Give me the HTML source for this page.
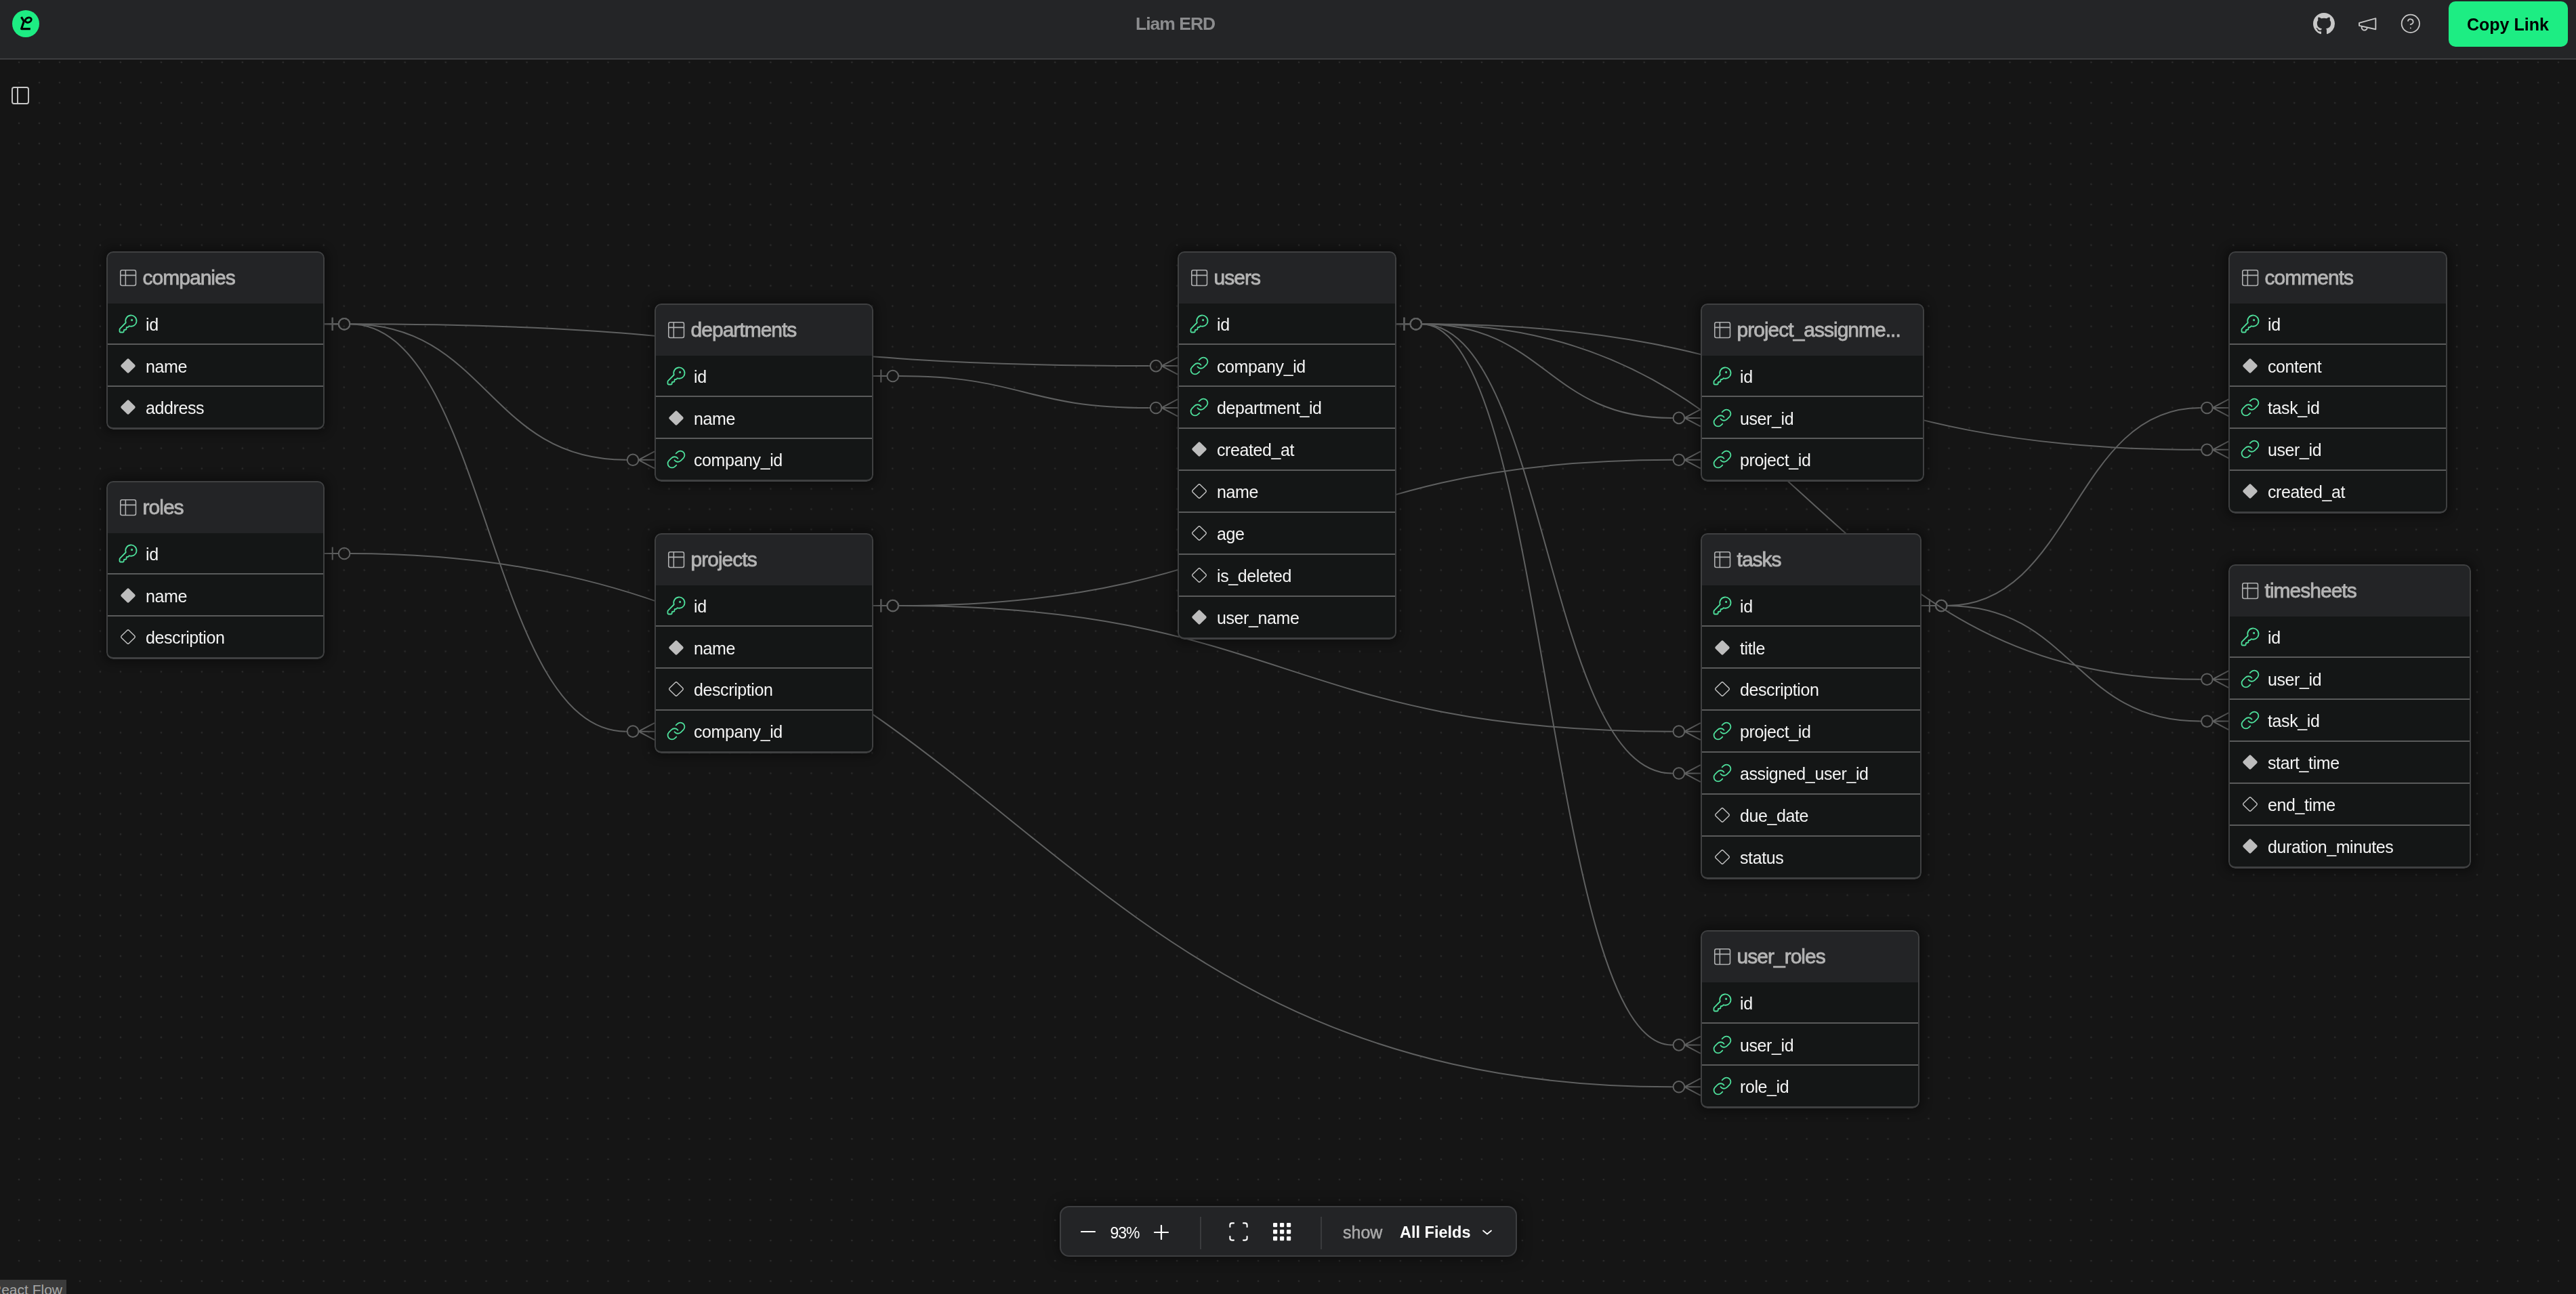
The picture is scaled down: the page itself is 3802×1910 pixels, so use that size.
<!DOCTYPE html>
<html><head><meta charset="utf-8"><style>
*{margin:0;padding:0;box-sizing:border-box}
html,body{width:3802px;height:1910px;overflow:hidden;background:#151515;font-family:"Liberation Sans",sans-serif;-webkit-font-smoothing:antialiased}
.gs{will-change:transform}
#flow{position:absolute;left:0;top:88px;width:3802px;height:1822px;background-color:#151515;
 background-image:radial-gradient(circle, #2b2b2b 0, #2b2b2b 1.0px, rgba(43,43,43,0) 1.7px);
 background-size:29.99px 29.99px;background-position:13.01px -11.07px}
#hdr{position:absolute;left:0;top:0;width:3802px;height:88px;background:#242527;border-bottom:2px solid #3d3e40}
#edges{position:absolute;left:0;top:0;width:3802px;height:1910px}
#edges path,#edges circle{fill:none;stroke:#5f6060;stroke-width:2}
.tbl{position:absolute;border-radius:10px;background:#141616;overflow:hidden;box-shadow:0 0 14px 6px rgba(0,0,0,.32)}
.bd{position:absolute;left:0;top:0;right:0;bottom:0;border:2px solid #3f4041;border-bottom-width:3px;border-radius:10px}
.hd{position:absolute;left:0;top:0;right:0;background:#232426}
.ti{position:absolute;left:16.7px;top:24.15px;width:30.3px;height:30.3px;fill:none;stroke:#b0b1b2;stroke-width:1.25;stroke-linecap:round;stroke-linejoin:round}
.tn{position:absolute;left:53.6px;top:22px;font-size:30px;line-height:34px;letter-spacing:-1px;color:#b4b4b4;-webkit-text-stroke:.8px #b4b4b4;white-space:nowrap}
.sep{position:absolute;left:0;right:0;height:2px;background:#5a5b5b}
.fi{position:absolute;left:16.8px;width:30px;height:30px;fill:none;stroke:#4ee09c;stroke-width:1.45;stroke-linecap:round;stroke-linejoin:round}
.di{position:absolute;left:19.8px;width:24px;height:24px}
.di .f{fill:#bdbdbd}
.di .o{fill:none;stroke:#c8c8c8;stroke-width:1.35}
.fn{position:absolute;left:58px;font-size:25px;line-height:28px;letter-spacing:-.4px;color:#f4f4f4;white-space:nowrap}
#tb{position:absolute;left:1564px;top:1780px;width:675px;height:75px;background:#232426;border:2px solid #3d3e40;border-radius:14px;box-shadow:0 0 20px rgba(0,0,0,.5)}
</style></head><body>
<div id="flow"></div>
<svg id="edges" viewBox="0 0 3802 1910"><path d="M515.90 478.24 C719.70 478.24 719.70 678.79 923.50 678.79"/><path d="M515.90 478.24 C1105.70 478.24 1105.70 540.11 1695.50 540.11"/><path d="M515.90 478.24 C719.70 478.24 719.70 1079.66 923.50 1079.66"/><path d="M1325.50 555.04 C1510.50 555.04 1510.50 601.99 1695.50 601.99"/><path d="M515.90 817.04 C1491.60 817.04 1491.60 1604.29 2467.30 1604.29"/><path d="M2097.60 478.24 C2282.45 478.24 2282.45 616.91 2467.30 616.91"/><path d="M2097.60 478.24 C2282.45 478.24 2282.45 1141.54 2467.30 1141.54"/><path d="M2097.60 478.24 C2282.45 478.24 2282.45 1542.41 2467.30 1542.41"/><path d="M2097.60 478.24 C2672.20 478.24 2672.20 663.86 3246.80 663.86"/><path d="M2097.60 478.24 C2672.20 478.24 2672.20 1002.71 3246.80 1002.71"/><path d="M1325.50 894.04 C1896.40 894.04 1896.40 678.79 2467.30 678.79"/><path d="M1325.50 894.04 C1896.40 894.04 1896.40 1079.66 2467.30 1079.66"/><path d="M2873.10 894.04 C3059.95 894.04 3059.95 601.99 3246.80 601.99"/><path d="M2873.10 894.04 C3059.95 894.04 3059.95 1064.59 3246.80 1064.59"/><path d="M478.90 478.24H499.80M490.70 468.74V487.74"/><circle cx="508.10" cy="478.24" r="8.30"/><path d="M923.50 678.79H925.80"/><circle cx="934.10" cy="678.79" r="8.30"/><path d="M942.40 678.79L966.00 666.29M942.40 678.79L966.00 678.79M942.40 678.79L966.00 691.29"/><path d="M478.90 478.24H499.80M490.70 468.74V487.74"/><circle cx="508.10" cy="478.24" r="8.30"/><path d="M1695.50 540.11H1697.80"/><circle cx="1706.10" cy="540.11" r="8.30"/><path d="M1714.40 540.11L1738.00 527.61M1714.40 540.11L1738.00 540.11M1714.40 540.11L1738.00 552.61"/><path d="M478.90 478.24H499.80M490.70 468.74V487.74"/><circle cx="508.10" cy="478.24" r="8.30"/><path d="M923.50 1079.66H925.80"/><circle cx="934.10" cy="1079.66" r="8.30"/><path d="M942.40 1079.66L966.00 1067.16M942.40 1079.66L966.00 1079.66M942.40 1079.66L966.00 1092.16"/><path d="M1288.50 555.04H1309.40M1300.30 545.54V564.54"/><circle cx="1317.70" cy="555.04" r="8.30"/><path d="M1695.50 601.99H1697.80"/><circle cx="1706.10" cy="601.99" r="8.30"/><path d="M1714.40 601.99L1738.00 589.49M1714.40 601.99L1738.00 601.99M1714.40 601.99L1738.00 614.49"/><path d="M478.90 817.04H499.80M490.70 807.54V826.54"/><circle cx="508.10" cy="817.04" r="8.30"/><path d="M2467.30 1604.29H2469.60"/><circle cx="2477.90" cy="1604.29" r="8.30"/><path d="M2486.20 1604.29L2509.80 1591.79M2486.20 1604.29L2509.80 1604.29M2486.20 1604.29L2509.80 1616.79"/><path d="M2060.60 478.24H2081.50M2072.40 468.74V487.74"/><circle cx="2089.80" cy="478.24" r="8.30"/><path d="M2467.30 616.91H2469.60"/><circle cx="2477.90" cy="616.91" r="8.30"/><path d="M2486.20 616.91L2509.80 604.41M2486.20 616.91L2509.80 616.91M2486.20 616.91L2509.80 629.41"/><path d="M2060.60 478.24H2081.50M2072.40 468.74V487.74"/><circle cx="2089.80" cy="478.24" r="8.30"/><path d="M2467.30 1141.54H2469.60"/><circle cx="2477.90" cy="1141.54" r="8.30"/><path d="M2486.20 1141.54L2509.80 1129.04M2486.20 1141.54L2509.80 1141.54M2486.20 1141.54L2509.80 1154.04"/><path d="M2060.60 478.24H2081.50M2072.40 468.74V487.74"/><circle cx="2089.80" cy="478.24" r="8.30"/><path d="M2467.30 1542.41H2469.60"/><circle cx="2477.90" cy="1542.41" r="8.30"/><path d="M2486.20 1542.41L2509.80 1529.91M2486.20 1542.41L2509.80 1542.41M2486.20 1542.41L2509.80 1554.91"/><path d="M2060.60 478.24H2081.50M2072.40 468.74V487.74"/><circle cx="2089.80" cy="478.24" r="8.30"/><path d="M3246.80 663.86H3249.10"/><circle cx="3257.40" cy="663.86" r="8.30"/><path d="M3265.70 663.86L3289.30 651.36M3265.70 663.86L3289.30 663.86M3265.70 663.86L3289.30 676.36"/><path d="M2060.60 478.24H2081.50M2072.40 468.74V487.74"/><circle cx="2089.80" cy="478.24" r="8.30"/><path d="M3246.80 1002.71H3249.10"/><circle cx="3257.40" cy="1002.71" r="8.30"/><path d="M3265.70 1002.71L3289.30 990.21M3265.70 1002.71L3289.30 1002.71M3265.70 1002.71L3289.30 1015.21"/><path d="M1288.50 894.04H1309.40M1300.30 884.54V903.54"/><circle cx="1317.70" cy="894.04" r="8.30"/><path d="M2467.30 678.79H2469.60"/><circle cx="2477.90" cy="678.79" r="8.30"/><path d="M2486.20 678.79L2509.80 666.29M2486.20 678.79L2509.80 678.79M2486.20 678.79L2509.80 691.29"/><path d="M1288.50 894.04H1309.40M1300.30 884.54V903.54"/><circle cx="1317.70" cy="894.04" r="8.30"/><path d="M2467.30 1079.66H2469.60"/><circle cx="2477.90" cy="1079.66" r="8.30"/><path d="M2486.20 1079.66L2509.80 1067.16M2486.20 1079.66L2509.80 1079.66M2486.20 1079.66L2509.80 1092.16"/><path d="M2836.10 894.04H2857.00M2847.90 884.54V903.54"/><circle cx="2865.30" cy="894.04" r="8.30"/><path d="M3246.80 601.99H3249.10"/><circle cx="3257.40" cy="601.99" r="8.30"/><path d="M3265.70 601.99L3289.30 589.49M3265.70 601.99L3289.30 601.99M3265.70 601.99L3289.30 614.49"/><path d="M2836.10 894.04H2857.00M2847.90 884.54V903.54"/><circle cx="2865.30" cy="894.04" r="8.30"/><path d="M3246.80 1064.59H3249.10"/><circle cx="3257.40" cy="1064.59" r="8.30"/><path d="M3265.70 1064.59L3289.30 1052.09M3265.70 1064.59L3289.30 1064.59M3265.70 1064.59L3289.30 1077.09"/></svg>
<div class="tbl gs" style="left:156.60px;top:370.70px;width:322.30px;height:263.23px"><div class="hd" style="height:76.60px"></div><svg class="ti" viewBox="0 0 24 24"><path d="M9 3H5a2 2 0 0 0-2 2v4m6-6h10a2 2 0 0 1 2 2v4M9 3v18m0 0h10a2 2 0 0 0 2-2V9M9 21H5a2 2 0 0 1-2-2V9m0 0h18"/></svg><span class="tn">companies</span><svg class="fi" style="top:91.64px" viewBox="0 0 24 24"><path d="M2.586 17.414A2 2 0 0 0 2 18.828V21a1 1 0 0 0 1 1h3a1 1 0 0 0 1-1v-1a1 1 0 0 1 1-1h1a1 1 0 0 0 1-1v-1a1 1 0 0 1 1-1h.172a2 2 0 0 0 1.414-.586l.814-.814a6.5 6.5 0 1 0-4-4z"/><circle cx="16.5" cy="7.5" r=".5"/></svg><span class="fn" style="top:93.66px">id</span><div class="sep" style="top:136.47px"></div><svg class="di" style="top:156.51px" viewBox="0 0 24 24"><path class="f" d="M10.6 1.9 Q12 .5 13.4 1.9 L22.1 10.6 Q23.5 12 22.1 13.4 L13.4 22.1 Q12 23.5 10.6 22.1 L1.9 13.4 Q.5 12 1.9 10.6Z"/></svg><span class="fn" style="top:155.53px">name</span><div class="sep" style="top:198.35px"></div><svg class="di" style="top:218.39px" viewBox="0 0 24 24"><path class="f" d="M10.6 1.9 Q12 .5 13.4 1.9 L22.1 10.6 Q23.5 12 22.1 13.4 L13.4 22.1 Q12 23.5 10.6 22.1 L1.9 13.4 Q.5 12 1.9 10.6Z"/></svg><span class="fn" style="top:217.41px">address</span><div class="bd"></div></div>
<div class="tbl gs" style="left:156.60px;top:709.50px;width:322.30px;height:263.23px"><div class="hd" style="height:76.60px"></div><svg class="ti" viewBox="0 0 24 24"><path d="M9 3H5a2 2 0 0 0-2 2v4m6-6h10a2 2 0 0 1 2 2v4M9 3v18m0 0h10a2 2 0 0 0 2-2V9M9 21H5a2 2 0 0 1-2-2V9m0 0h18"/></svg><span class="tn">roles</span><svg class="fi" style="top:91.64px" viewBox="0 0 24 24"><path d="M2.586 17.414A2 2 0 0 0 2 18.828V21a1 1 0 0 0 1 1h3a1 1 0 0 0 1-1v-1a1 1 0 0 1 1-1h1a1 1 0 0 0 1-1v-1a1 1 0 0 1 1-1h.172a2 2 0 0 0 1.414-.586l.814-.814a6.5 6.5 0 1 0-4-4z"/><circle cx="16.5" cy="7.5" r=".5"/></svg><span class="fn" style="top:93.66px">id</span><div class="sep" style="top:136.47px"></div><svg class="di" style="top:156.51px" viewBox="0 0 24 24"><path class="f" d="M10.6 1.9 Q12 .5 13.4 1.9 L22.1 10.6 Q23.5 12 22.1 13.4 L13.4 22.1 Q12 23.5 10.6 22.1 L1.9 13.4 Q.5 12 1.9 10.6Z"/></svg><span class="fn" style="top:155.53px">name</span><div class="sep" style="top:198.35px"></div><svg class="di" style="top:218.39px" viewBox="0 0 24 24"><path class="o" d="M10.6 2.4 Q12 1 13.4 2.4 L21.6 10.6 Q23 12 21.6 13.4 L13.4 21.6 Q12 23 10.6 21.6 L2.4 13.4 Q1 12 2.4 10.6Z"/></svg><span class="fn" style="top:217.41px">description</span><div class="bd"></div></div>
<div class="tbl gs" style="left:966.00px;top:447.50px;width:322.50px;height:263.23px"><div class="hd" style="height:76.60px"></div><svg class="ti" viewBox="0 0 24 24"><path d="M9 3H5a2 2 0 0 0-2 2v4m6-6h10a2 2 0 0 1 2 2v4M9 3v18m0 0h10a2 2 0 0 0 2-2V9M9 21H5a2 2 0 0 1-2-2V9m0 0h18"/></svg><span class="tn">departments</span><svg class="fi" style="top:91.64px" viewBox="0 0 24 24"><path d="M2.586 17.414A2 2 0 0 0 2 18.828V21a1 1 0 0 0 1 1h3a1 1 0 0 0 1-1v-1a1 1 0 0 1 1-1h1a1 1 0 0 0 1-1v-1a1 1 0 0 1 1-1h.172a2 2 0 0 0 1.414-.586l.814-.814a6.5 6.5 0 1 0-4-4z"/><circle cx="16.5" cy="7.5" r=".5"/></svg><span class="fn" style="top:93.66px">id</span><div class="sep" style="top:136.47px"></div><svg class="di" style="top:156.51px" viewBox="0 0 24 24"><path class="f" d="M10.6 1.9 Q12 .5 13.4 1.9 L22.1 10.6 Q23.5 12 22.1 13.4 L13.4 22.1 Q12 23.5 10.6 22.1 L1.9 13.4 Q.5 12 1.9 10.6Z"/></svg><span class="fn" style="top:155.53px">name</span><div class="sep" style="top:198.35px"></div><svg class="fi" style="top:215.39px" viewBox="0 0 24 24"><path d="M10 13a5 5 0 0 0 7.54.54l3-3a5 5 0 0 0-7.07-7.07l-1.72 1.71"/><path d="M14 11a5 5 0 0 0-7.54-.54l-3 3a5 5 0 0 0 7.07 7.07l1.71-1.71"/></svg><span class="fn" style="top:217.41px">company_id</span><div class="bd"></div></div>
<div class="tbl gs" style="left:966.00px;top:786.50px;width:322.50px;height:325.10px"><div class="hd" style="height:76.60px"></div><svg class="ti" viewBox="0 0 24 24"><path d="M9 3H5a2 2 0 0 0-2 2v4m6-6h10a2 2 0 0 1 2 2v4M9 3v18m0 0h10a2 2 0 0 0 2-2V9M9 21H5a2 2 0 0 1-2-2V9m0 0h18"/></svg><span class="tn">projects</span><svg class="fi" style="top:91.64px" viewBox="0 0 24 24"><path d="M2.586 17.414A2 2 0 0 0 2 18.828V21a1 1 0 0 0 1 1h3a1 1 0 0 0 1-1v-1a1 1 0 0 1 1-1h1a1 1 0 0 0 1-1v-1a1 1 0 0 1 1-1h.172a2 2 0 0 0 1.414-.586l.814-.814a6.5 6.5 0 1 0-4-4z"/><circle cx="16.5" cy="7.5" r=".5"/></svg><span class="fn" style="top:93.66px">id</span><div class="sep" style="top:136.47px"></div><svg class="di" style="top:156.51px" viewBox="0 0 24 24"><path class="f" d="M10.6 1.9 Q12 .5 13.4 1.9 L22.1 10.6 Q23.5 12 22.1 13.4 L13.4 22.1 Q12 23.5 10.6 22.1 L1.9 13.4 Q.5 12 1.9 10.6Z"/></svg><span class="fn" style="top:155.53px">name</span><div class="sep" style="top:198.35px"></div><svg class="di" style="top:218.39px" viewBox="0 0 24 24"><path class="o" d="M10.6 2.4 Q12 1 13.4 2.4 L21.6 10.6 Q23 12 21.6 13.4 L13.4 21.6 Q12 23 10.6 21.6 L2.4 13.4 Q1 12 2.4 10.6Z"/></svg><span class="fn" style="top:217.41px">description</span><div class="sep" style="top:260.23px"></div><svg class="fi" style="top:277.26px" viewBox="0 0 24 24"><path d="M10 13a5 5 0 0 0 7.54.54l3-3a5 5 0 0 0-7.07-7.07l-1.72 1.71"/><path d="M14 11a5 5 0 0 0-7.54-.54l-3 3a5 5 0 0 0 7.07 7.07l1.71-1.71"/></svg><span class="fn" style="top:279.28px">company_id</span><div class="bd"></div></div>
<div class="tbl gs" style="left:1738.00px;top:370.70px;width:322.60px;height:572.60px"><div class="hd" style="height:76.60px"></div><svg class="ti" viewBox="0 0 24 24"><path d="M9 3H5a2 2 0 0 0-2 2v4m6-6h10a2 2 0 0 1 2 2v4M9 3v18m0 0h10a2 2 0 0 0 2-2V9M9 21H5a2 2 0 0 1-2-2V9m0 0h18"/></svg><span class="tn">users</span><svg class="fi" style="top:91.64px" viewBox="0 0 24 24"><path d="M2.586 17.414A2 2 0 0 0 2 18.828V21a1 1 0 0 0 1 1h3a1 1 0 0 0 1-1v-1a1 1 0 0 1 1-1h1a1 1 0 0 0 1-1v-1a1 1 0 0 1 1-1h.172a2 2 0 0 0 1.414-.586l.814-.814a6.5 6.5 0 1 0-4-4z"/><circle cx="16.5" cy="7.5" r=".5"/></svg><span class="fn" style="top:93.66px">id</span><div class="sep" style="top:136.47px"></div><svg class="fi" style="top:153.51px" viewBox="0 0 24 24"><path d="M10 13a5 5 0 0 0 7.54.54l3-3a5 5 0 0 0-7.07-7.07l-1.72 1.71"/><path d="M14 11a5 5 0 0 0-7.54-.54l-3 3a5 5 0 0 0 7.07 7.07l1.71-1.71"/></svg><span class="fn" style="top:155.53px">company_id</span><div class="sep" style="top:198.35px"></div><svg class="fi" style="top:215.39px" viewBox="0 0 24 24"><path d="M10 13a5 5 0 0 0 7.54.54l3-3a5 5 0 0 0-7.07-7.07l-1.72 1.71"/><path d="M14 11a5 5 0 0 0-7.54-.54l-3 3a5 5 0 0 0 7.07 7.07l1.71-1.71"/></svg><span class="fn" style="top:217.41px">department_id</span><div class="sep" style="top:260.23px"></div><svg class="di" style="top:280.26px" viewBox="0 0 24 24"><path class="f" d="M10.6 1.9 Q12 .5 13.4 1.9 L22.1 10.6 Q23.5 12 22.1 13.4 L13.4 22.1 Q12 23.5 10.6 22.1 L1.9 13.4 Q.5 12 1.9 10.6Z"/></svg><span class="fn" style="top:279.28px">created_at</span><div class="sep" style="top:322.10px"></div><svg class="di" style="top:342.14px" viewBox="0 0 24 24"><path class="o" d="M10.6 2.4 Q12 1 13.4 2.4 L21.6 10.6 Q23 12 21.6 13.4 L13.4 21.6 Q12 23 10.6 21.6 L2.4 13.4 Q1 12 2.4 10.6Z"/></svg><span class="fn" style="top:341.16px">name</span><div class="sep" style="top:383.98px"></div><svg class="di" style="top:404.01px" viewBox="0 0 24 24"><path class="o" d="M10.6 2.4 Q12 1 13.4 2.4 L21.6 10.6 Q23 12 21.6 13.4 L13.4 21.6 Q12 23 10.6 21.6 L2.4 13.4 Q1 12 2.4 10.6Z"/></svg><span class="fn" style="top:403.03px">age</span><div class="sep" style="top:445.85px"></div><svg class="di" style="top:465.89px" viewBox="0 0 24 24"><path class="o" d="M10.6 2.4 Q12 1 13.4 2.4 L21.6 10.6 Q23 12 21.6 13.4 L13.4 21.6 Q12 23 10.6 21.6 L2.4 13.4 Q1 12 2.4 10.6Z"/></svg><span class="fn" style="top:464.91px">is_deleted</span><div class="sep" style="top:507.73px"></div><svg class="di" style="top:527.76px" viewBox="0 0 24 24"><path class="f" d="M10.6 1.9 Q12 .5 13.4 1.9 L22.1 10.6 Q23.5 12 22.1 13.4 L13.4 22.1 Q12 23.5 10.6 22.1 L1.9 13.4 Q.5 12 1.9 10.6Z"/></svg><span class="fn" style="top:526.78px">user_name</span><div class="bd"></div></div>
<div class="tbl gs" style="left:2509.80px;top:447.50px;width:330.20px;height:263.23px"><div class="hd" style="height:76.60px"></div><svg class="ti" viewBox="0 0 24 24"><path d="M9 3H5a2 2 0 0 0-2 2v4m6-6h10a2 2 0 0 1 2 2v4M9 3v18m0 0h10a2 2 0 0 0 2-2V9M9 21H5a2 2 0 0 1-2-2V9m0 0h18"/></svg><span class="tn">project_assignme...</span><svg class="fi" style="top:91.64px" viewBox="0 0 24 24"><path d="M2.586 17.414A2 2 0 0 0 2 18.828V21a1 1 0 0 0 1 1h3a1 1 0 0 0 1-1v-1a1 1 0 0 1 1-1h1a1 1 0 0 0 1-1v-1a1 1 0 0 1 1-1h.172a2 2 0 0 0 1.414-.586l.814-.814a6.5 6.5 0 1 0-4-4z"/><circle cx="16.5" cy="7.5" r=".5"/></svg><span class="fn" style="top:93.66px">id</span><div class="sep" style="top:136.47px"></div><svg class="fi" style="top:153.51px" viewBox="0 0 24 24"><path d="M10 13a5 5 0 0 0 7.54.54l3-3a5 5 0 0 0-7.07-7.07l-1.72 1.71"/><path d="M14 11a5 5 0 0 0-7.54-.54l-3 3a5 5 0 0 0 7.07 7.07l1.71-1.71"/></svg><span class="fn" style="top:155.53px">user_id</span><div class="sep" style="top:198.35px"></div><svg class="fi" style="top:215.39px" viewBox="0 0 24 24"><path d="M10 13a5 5 0 0 0 7.54.54l3-3a5 5 0 0 0-7.07-7.07l-1.72 1.71"/><path d="M14 11a5 5 0 0 0-7.54-.54l-3 3a5 5 0 0 0 7.07 7.07l1.71-1.71"/></svg><span class="fn" style="top:217.41px">project_id</span><div class="bd"></div></div>
<div class="tbl gs" style="left:2509.80px;top:786.50px;width:326.30px;height:510.73px"><div class="hd" style="height:76.60px"></div><svg class="ti" viewBox="0 0 24 24"><path d="M9 3H5a2 2 0 0 0-2 2v4m6-6h10a2 2 0 0 1 2 2v4M9 3v18m0 0h10a2 2 0 0 0 2-2V9M9 21H5a2 2 0 0 1-2-2V9m0 0h18"/></svg><span class="tn">tasks</span><svg class="fi" style="top:91.64px" viewBox="0 0 24 24"><path d="M2.586 17.414A2 2 0 0 0 2 18.828V21a1 1 0 0 0 1 1h3a1 1 0 0 0 1-1v-1a1 1 0 0 1 1-1h1a1 1 0 0 0 1-1v-1a1 1 0 0 1 1-1h.172a2 2 0 0 0 1.414-.586l.814-.814a6.5 6.5 0 1 0-4-4z"/><circle cx="16.5" cy="7.5" r=".5"/></svg><span class="fn" style="top:93.66px">id</span><div class="sep" style="top:136.47px"></div><svg class="di" style="top:156.51px" viewBox="0 0 24 24"><path class="f" d="M10.6 1.9 Q12 .5 13.4 1.9 L22.1 10.6 Q23.5 12 22.1 13.4 L13.4 22.1 Q12 23.5 10.6 22.1 L1.9 13.4 Q.5 12 1.9 10.6Z"/></svg><span class="fn" style="top:155.53px">title</span><div class="sep" style="top:198.35px"></div><svg class="di" style="top:218.39px" viewBox="0 0 24 24"><path class="o" d="M10.6 2.4 Q12 1 13.4 2.4 L21.6 10.6 Q23 12 21.6 13.4 L13.4 21.6 Q12 23 10.6 21.6 L2.4 13.4 Q1 12 2.4 10.6Z"/></svg><span class="fn" style="top:217.41px">description</span><div class="sep" style="top:260.23px"></div><svg class="fi" style="top:277.26px" viewBox="0 0 24 24"><path d="M10 13a5 5 0 0 0 7.54.54l3-3a5 5 0 0 0-7.07-7.07l-1.72 1.71"/><path d="M14 11a5 5 0 0 0-7.54-.54l-3 3a5 5 0 0 0 7.07 7.07l1.71-1.71"/></svg><span class="fn" style="top:279.28px">project_id</span><div class="sep" style="top:322.10px"></div><svg class="fi" style="top:339.14px" viewBox="0 0 24 24"><path d="M10 13a5 5 0 0 0 7.54.54l3-3a5 5 0 0 0-7.07-7.07l-1.72 1.71"/><path d="M14 11a5 5 0 0 0-7.54-.54l-3 3a5 5 0 0 0 7.07 7.07l1.71-1.71"/></svg><span class="fn" style="top:341.16px">assigned_user_id</span><div class="sep" style="top:383.98px"></div><svg class="di" style="top:404.01px" viewBox="0 0 24 24"><path class="o" d="M10.6 2.4 Q12 1 13.4 2.4 L21.6 10.6 Q23 12 21.6 13.4 L13.4 21.6 Q12 23 10.6 21.6 L2.4 13.4 Q1 12 2.4 10.6Z"/></svg><span class="fn" style="top:403.03px">due_date</span><div class="sep" style="top:445.85px"></div><svg class="di" style="top:465.89px" viewBox="0 0 24 24"><path class="o" d="M10.6 2.4 Q12 1 13.4 2.4 L21.6 10.6 Q23 12 21.6 13.4 L13.4 21.6 Q12 23 10.6 21.6 L2.4 13.4 Q1 12 2.4 10.6Z"/></svg><span class="fn" style="top:464.91px">status</span><div class="bd"></div></div>
<div class="tbl gs" style="left:2509.80px;top:1373.00px;width:322.80px;height:263.23px"><div class="hd" style="height:76.60px"></div><svg class="ti" viewBox="0 0 24 24"><path d="M9 3H5a2 2 0 0 0-2 2v4m6-6h10a2 2 0 0 1 2 2v4M9 3v18m0 0h10a2 2 0 0 0 2-2V9M9 21H5a2 2 0 0 1-2-2V9m0 0h18"/></svg><span class="tn">user_roles</span><svg class="fi" style="top:91.64px" viewBox="0 0 24 24"><path d="M2.586 17.414A2 2 0 0 0 2 18.828V21a1 1 0 0 0 1 1h3a1 1 0 0 0 1-1v-1a1 1 0 0 1 1-1h1a1 1 0 0 0 1-1v-1a1 1 0 0 1 1-1h.172a2 2 0 0 0 1.414-.586l.814-.814a6.5 6.5 0 1 0-4-4z"/><circle cx="16.5" cy="7.5" r=".5"/></svg><span class="fn" style="top:93.66px">id</span><div class="sep" style="top:136.47px"></div><svg class="fi" style="top:153.51px" viewBox="0 0 24 24"><path d="M10 13a5 5 0 0 0 7.54.54l3-3a5 5 0 0 0-7.07-7.07l-1.72 1.71"/><path d="M14 11a5 5 0 0 0-7.54-.54l-3 3a5 5 0 0 0 7.07 7.07l1.71-1.71"/></svg><span class="fn" style="top:155.53px">user_id</span><div class="sep" style="top:198.35px"></div><svg class="fi" style="top:215.39px" viewBox="0 0 24 24"><path d="M10 13a5 5 0 0 0 7.54.54l3-3a5 5 0 0 0-7.07-7.07l-1.72 1.71"/><path d="M14 11a5 5 0 0 0-7.54-.54l-3 3a5 5 0 0 0 7.07 7.07l1.71-1.71"/></svg><span class="fn" style="top:217.41px">role_id</span><div class="bd"></div></div>
<div class="tbl gs" style="left:3289.30px;top:370.70px;width:322.60px;height:386.98px"><div class="hd" style="height:76.60px"></div><svg class="ti" viewBox="0 0 24 24"><path d="M9 3H5a2 2 0 0 0-2 2v4m6-6h10a2 2 0 0 1 2 2v4M9 3v18m0 0h10a2 2 0 0 0 2-2V9M9 21H5a2 2 0 0 1-2-2V9m0 0h18"/></svg><span class="tn">comments</span><svg class="fi" style="top:91.64px" viewBox="0 0 24 24"><path d="M2.586 17.414A2 2 0 0 0 2 18.828V21a1 1 0 0 0 1 1h3a1 1 0 0 0 1-1v-1a1 1 0 0 1 1-1h1a1 1 0 0 0 1-1v-1a1 1 0 0 1 1-1h.172a2 2 0 0 0 1.414-.586l.814-.814a6.5 6.5 0 1 0-4-4z"/><circle cx="16.5" cy="7.5" r=".5"/></svg><span class="fn" style="top:93.66px">id</span><div class="sep" style="top:136.47px"></div><svg class="di" style="top:156.51px" viewBox="0 0 24 24"><path class="f" d="M10.6 1.9 Q12 .5 13.4 1.9 L22.1 10.6 Q23.5 12 22.1 13.4 L13.4 22.1 Q12 23.5 10.6 22.1 L1.9 13.4 Q.5 12 1.9 10.6Z"/></svg><span class="fn" style="top:155.53px">content</span><div class="sep" style="top:198.35px"></div><svg class="fi" style="top:215.39px" viewBox="0 0 24 24"><path d="M10 13a5 5 0 0 0 7.54.54l3-3a5 5 0 0 0-7.07-7.07l-1.72 1.71"/><path d="M14 11a5 5 0 0 0-7.54-.54l-3 3a5 5 0 0 0 7.07 7.07l1.71-1.71"/></svg><span class="fn" style="top:217.41px">task_id</span><div class="sep" style="top:260.23px"></div><svg class="fi" style="top:277.26px" viewBox="0 0 24 24"><path d="M10 13a5 5 0 0 0 7.54.54l3-3a5 5 0 0 0-7.07-7.07l-1.72 1.71"/><path d="M14 11a5 5 0 0 0-7.54-.54l-3 3a5 5 0 0 0 7.07 7.07l1.71-1.71"/></svg><span class="fn" style="top:279.28px">user_id</span><div class="sep" style="top:322.10px"></div><svg class="di" style="top:342.14px" viewBox="0 0 24 24"><path class="f" d="M10.6 1.9 Q12 .5 13.4 1.9 L22.1 10.6 Q23.5 12 22.1 13.4 L13.4 22.1 Q12 23.5 10.6 22.1 L1.9 13.4 Q.5 12 1.9 10.6Z"/></svg><span class="fn" style="top:341.16px">created_at</span><div class="bd"></div></div>
<div class="tbl gs" style="left:3289.30px;top:833.30px;width:358.20px;height:448.85px"><div class="hd" style="height:76.60px"></div><svg class="ti" viewBox="0 0 24 24"><path d="M9 3H5a2 2 0 0 0-2 2v4m6-6h10a2 2 0 0 1 2 2v4M9 3v18m0 0h10a2 2 0 0 0 2-2V9M9 21H5a2 2 0 0 1-2-2V9m0 0h18"/></svg><span class="tn">timesheets</span><svg class="fi" style="top:91.64px" viewBox="0 0 24 24"><path d="M2.586 17.414A2 2 0 0 0 2 18.828V21a1 1 0 0 0 1 1h3a1 1 0 0 0 1-1v-1a1 1 0 0 1 1-1h1a1 1 0 0 0 1-1v-1a1 1 0 0 1 1-1h.172a2 2 0 0 0 1.414-.586l.814-.814a6.5 6.5 0 1 0-4-4z"/><circle cx="16.5" cy="7.5" r=".5"/></svg><span class="fn" style="top:93.66px">id</span><div class="sep" style="top:136.47px"></div><svg class="fi" style="top:153.51px" viewBox="0 0 24 24"><path d="M10 13a5 5 0 0 0 7.54.54l3-3a5 5 0 0 0-7.07-7.07l-1.72 1.71"/><path d="M14 11a5 5 0 0 0-7.54-.54l-3 3a5 5 0 0 0 7.07 7.07l1.71-1.71"/></svg><span class="fn" style="top:155.53px">user_id</span><div class="sep" style="top:198.35px"></div><svg class="fi" style="top:215.39px" viewBox="0 0 24 24"><path d="M10 13a5 5 0 0 0 7.54.54l3-3a5 5 0 0 0-7.07-7.07l-1.72 1.71"/><path d="M14 11a5 5 0 0 0-7.54-.54l-3 3a5 5 0 0 0 7.07 7.07l1.71-1.71"/></svg><span class="fn" style="top:217.41px">task_id</span><div class="sep" style="top:260.23px"></div><svg class="di" style="top:280.26px" viewBox="0 0 24 24"><path class="f" d="M10.6 1.9 Q12 .5 13.4 1.9 L22.1 10.6 Q23.5 12 22.1 13.4 L13.4 22.1 Q12 23.5 10.6 22.1 L1.9 13.4 Q.5 12 1.9 10.6Z"/></svg><span class="fn" style="top:279.28px">start_time</span><div class="sep" style="top:322.10px"></div><svg class="di" style="top:342.14px" viewBox="0 0 24 24"><path class="o" d="M10.6 2.4 Q12 1 13.4 2.4 L21.6 10.6 Q23 12 21.6 13.4 L13.4 21.6 Q12 23 10.6 21.6 L2.4 13.4 Q1 12 2.4 10.6Z"/></svg><span class="fn" style="top:341.16px">end_time</span><div class="sep" style="top:383.98px"></div><svg class="di" style="top:404.01px" viewBox="0 0 24 24"><path class="f" d="M10.6 1.9 Q12 .5 13.4 1.9 L22.1 10.6 Q23.5 12 22.1 13.4 L13.4 22.1 Q12 23.5 10.6 22.1 L1.9 13.4 Q.5 12 1.9 10.6Z"/></svg><span class="fn" style="top:403.03px">duration_minutes</span><div class="bd"></div></div>
<div id="hdr" class="gs">
 <svg style="position:absolute;left:17px;top:14px;width:42px;height:42px" viewBox="17 14 42 42">
  <circle cx="38" cy="35" r="20" fill="#1ded83"/>
  <path d="M31.4 25.2 L35.3 31.4 L31.6 42.6 L44.8 42.6" fill="none" stroke="#000" stroke-width="3.1" stroke-linejoin="round"/>
  <ellipse cx="41.8" cy="29.6" rx="4.6" ry="3.4" transform="rotate(-22 41.8 29.6)" fill="none" stroke="#000" stroke-width="2.9"/>
 </svg>
 <div style="position:absolute;left:1676px;top:20px;font-size:26.5px;line-height:30px;letter-spacing:-1px;font-weight:bold;color:#8b8c8e;white-space:nowrap">Liam ERD</div>
 <svg viewBox="0 0 16 16" style="position:absolute;left:3414px;top:18.5px;width:32px;height:32px"><path fill="#c8c8c8" d="M8 0C3.58 0 0 3.58 0 8c0 3.54 2.29 6.53 5.47 7.59.4.07.55-.17.55-.38 0-.19-.01-.82-.01-1.49-2.01.37-2.53-.49-2.69-.94-.09-.23-.48-.94-.82-1.13-.28-.15-.68-.52-.01-.53.63-.01 1.08.58 1.23.82.72 1.21 1.87.87 2.33.66.07-.52.28-.87.51-1.07-1.78-.2-3.64-.89-3.64-3.95 0-.87.31-1.59.82-2.150-.08-.2-.36-1.02.08-2.12 0 0 .67-.21 2.2.82.64-.18 1.32-.27 2-.27.68 0 1.36.09 2 .27 1.53-1.04 2.2-.82 2.2-.82.44 1.1.16 1.92.08 2.12.51.56.82 1.27.82 2.15 0 3.07-1.87 3.75-3.65 3.95.29.25.54.73.54 1.48 0 1.07-.01 1.93-.01 2.2 0 .21.15.46.55.38A8.013 8.013 0 0016 8c0-4.42-3.58-8-8-8z"/></svg>
 <svg style="position:absolute;left:3477.6px;top:18.6px;width:32.4px;height:32.4px" viewBox="0 0 24 24" fill="none" stroke="#c8c8c8" stroke-width="1.4" stroke-linecap="round" stroke-linejoin="round"><path d="m3 11 18-5v12L3 14v-3z"/><path d="M11.6 16.8a3 3 0 1 1-5.8-1.6"/></svg>
 <svg style="position:absolute;left:3542.1px;top:19.2px;width:31.7px;height:31.7px" viewBox="0 0 24 24" fill="none" stroke="#c8c8c8" stroke-width="1.35" stroke-linecap="round" stroke-linejoin="round"><circle cx="12" cy="12" r="10"/><path d="M9.09 9a3 3 0 0 1 5.83 1c0 2-3 3-3 3"/><path d="M12 17h.01"/></svg>
 <div style="position:absolute;left:3614px;top:2px;width:176px;height:67px;background:#1ded83;border-radius:10px"></div>
 <div style="position:absolute;left:3641px;top:21px;font-size:25px;line-height:30px;font-weight:bold;color:#000;white-space:nowrap">Copy Link</div>
</div>
<svg style="position:absolute;left:14px;top:125px;width:32px;height:32px" viewBox="0 0 24 24" fill="none" stroke="#c8c8c8" stroke-width="1.45" stroke-linecap="round" stroke-linejoin="round"><rect width="18" height="18" x="3" y="3" rx="2"/><path d="M9 3v18"/></svg>
<div id="tb" class="gs">
 <svg style="position:absolute;left:29px;top:34px;width:22px;height:4px" viewBox="0 0 22 4"><path d="M1 2H21" stroke="#fff" stroke-width="2.2" stroke-linecap="round"/></svg>
 <div style="position:absolute;left:72.5px;top:24px;font-size:23px;line-height:28px;letter-spacing:-1px;color:#fff;white-space:nowrap">93%</div>
 <svg style="position:absolute;left:137px;top:26px;width:22px;height:22px" viewBox="0 0 22 22"><path d="M1 11H21M11 1V21" stroke="#fff" stroke-width="2.2" stroke-linecap="round"/></svg>
 <div style="position:absolute;left:205px;top:14px;width:2px;height:48px;background:#3a3b3d"></div>
 <svg style="position:absolute;left:248px;top:21.5px;width:28px;height:28px" viewBox="2 2 20 20" fill="none" stroke="#fff" stroke-width="1.5" stroke-linecap="round" stroke-linejoin="round"><path d="M3 7V5a2 2 0 0 1 2-2h2"/><path d="M17 3h2a2 2 0 0 1 2 2v2"/><path d="M21 17v2a2 2 0 0 1-2 2h-2"/><path d="M7 21H5a2 2 0 0 1-2-2v-2"/></svg>
 <svg style="position:absolute;left:312px;top:22px;width:28px;height:28px" viewBox="0 0 28 28" fill="#fff"><rect x="1" y="1" width="6.2" height="6.2" rx="1.2"/><rect x="11" y="1" width="6.2" height="6.2" rx="1.2"/><rect x="21" y="1" width="6.2" height="6.2" rx="1.2"/><rect x="1" y="11" width="6.2" height="6.2" rx="1.2"/><rect x="11" y="11" width="6.2" height="6.2" rx="1.2"/><rect x="21" y="11" width="6.2" height="6.2" rx="1.2"/><rect x="1" y="21" width="6.2" height="6.2" rx="1.2"/><rect x="11" y="21" width="6.2" height="6.2" rx="1.2"/><rect x="21" y="21" width="6.2" height="6.2" rx="1.2"/></svg>
 <div style="position:absolute;left:383px;top:14px;width:2px;height:48px;background:#3a3b3d"></div>
 <div style="position:absolute;left:416px;top:22px;font-size:25px;line-height:30px;color:#a9a9a9;-webkit-text-stroke:.5px #a9a9a9;white-space:nowrap">show</div>
 <div style="position:absolute;left:500px;top:22px;font-size:23.5px;line-height:30px;font-weight:bold;color:#fff;white-space:nowrap">All Fields</div>
 <svg style="position:absolute;left:620px;top:30px;width:18px;height:14px" viewBox="0 0 18 14"><path d="M3 4.5L9 9.5L15 4.5" fill="none" stroke="#fff" stroke-width="1.7" stroke-linecap="round" stroke-linejoin="round"/></svg>
</div>
<div style="position:absolute;left:0;top:1889px;width:98px;height:21px;background:#3b3b3b;overflow:hidden">
 <div style="position:absolute;right:6px;top:3.3px;font-size:21px;line-height:24px;color:#a8a8a8;white-space:nowrap">React Flow</div>
</div>
</body></html>
